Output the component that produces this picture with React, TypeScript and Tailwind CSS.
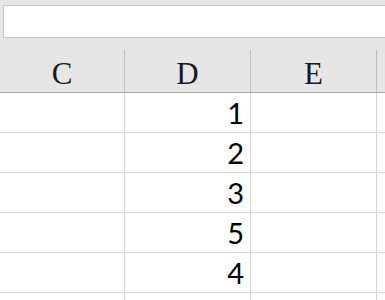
const columns = [
  { name: 'C', width: 'w-[125px]' },
  { name: 'D', width: 'w-[126px]' },
  { name: 'E', width: 'w-[126px]' },
  { name: 'F', width: 'w-[126px]' },
];

const values = ['1', '2', '3', '5', '4', ''];

export default function App() {
  return (
    <div className="w-[385px] h-[300px] overflow-hidden bg-white">
      {/* Formula bar */}
      <div className="h-[50px] bg-[#e6e6e6] pt-[5px] pl-[3px]">
        <div className="h-[33px] w-[400px] bg-white border border-[#c6c6c6]" />
      </div>

      {/* Column headers */}
      <div className="flex h-[43px] bg-[#e6e6e6] border-b border-[#ababab]">
        {columns.map((col) => (
          <div
            key={col.name}
            className={`${col.width} shrink-0 flex items-center justify-center border-r border-[#bdbdbd] text-[31px] leading-none text-[#1a1a1a] pt-[5px]`}
            style={{ fontFamily: '"Liberation Serif", serif' }}
          >
            {col.name === 'F' ? '' : col.name}
          </div>
        ))}
      </div>

      {/* Rows */}
      {values.map((v, i) => (
        <div key={i} className="flex h-[40px]">
          {columns.map((col) => (
            <div
              key={col.name}
              className={`${col.width} shrink-0 flex items-center justify-end pr-[6px] border-r border-b border-[#d4d4d4] text-[29px] leading-none text-black`}
              style={{ fontFamily: 'Lato, "Liberation Sans", sans-serif' }}
            >
              {col.name === 'D' ? v : ''}
            </div>
          ))}
        </div>
      ))}
    </div>
  );
}
